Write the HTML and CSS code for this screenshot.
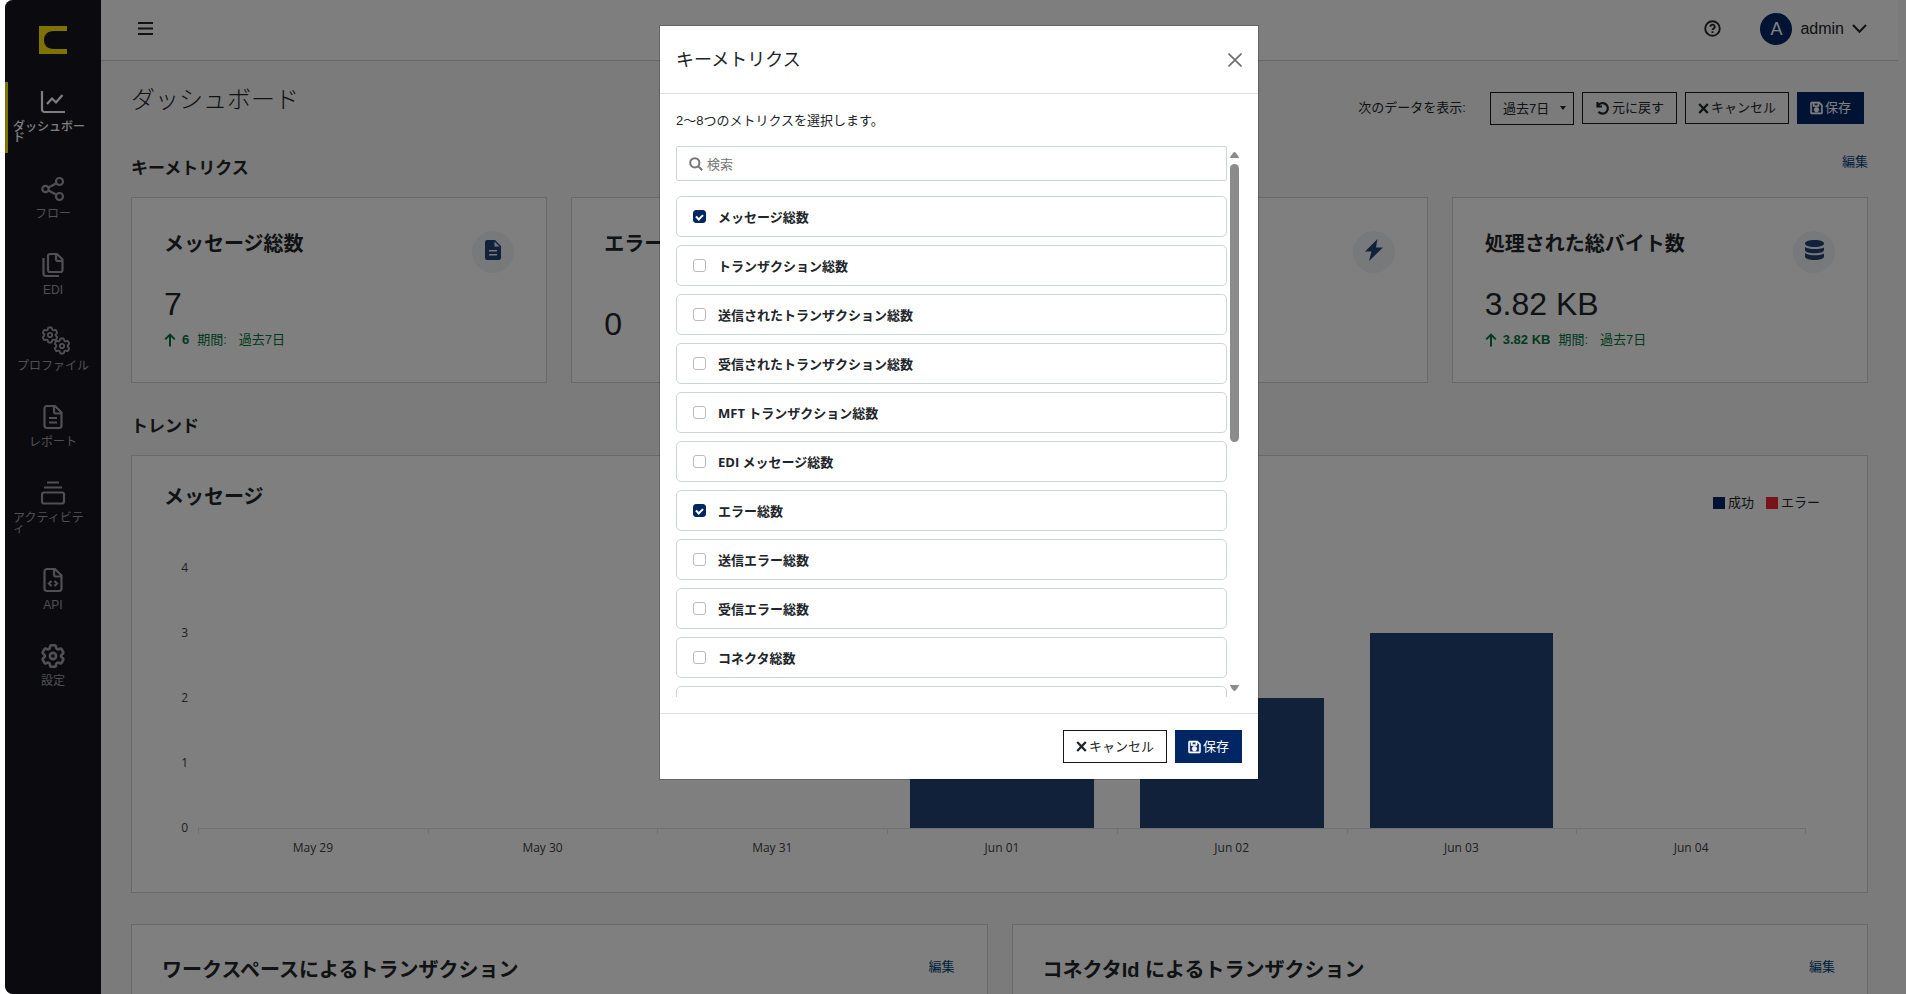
FILE: index.html
```
<!DOCTYPE html>
<html lang="ja">
<head>
    <meta charset="UTF-8">
    <meta name="viewport" content="width=device-width, initial-scale=1.0">
    <title>ダッシュボード</title>
    <link rel="stylesheet" href="styles.css">
</head>
<body>
    <svg class="sprite" aria-hidden="true">
        <symbol id="i-gear" viewBox="0 0 24 24">
            <path d="M9.594 3.94c.09-.542.56-.94 1.11-.94h2.593c.55 0 1.02.398 1.11.94l.213 1.281c.063.374.313.686.645.87.074.04.147.083.22.127.325.196.72.257 1.075.124l1.217-.456a1.125 1.125 0 0 1 1.37.49l1.296 2.247a1.125 1.125 0 0 1-.26 1.431l-1.003.827c-.293.241-.438.613-.43.992a7.723 7.723 0 0 1 0 .255c-.008.378.137.75.43.991l1.004.827c.424.35.534.955.26 1.43l-1.298 2.247a1.125 1.125 0 0 1-1.369.491l-1.217-.456c-.355-.133-.75-.072-1.076.124a6.47 6.47 0 0 1-.22.128c-.331.183-.581.495-.644.869l-.213 1.281c-.09.543-.56.94-1.11.94h-2.594c-.55 0-1.019-.398-1.11-.94l-.213-1.281c-.062-.374-.312-.686-.644-.87a6.52 6.52 0 0 1-.22-.127c-.325-.196-.72-.257-1.076-.124l-1.217.456a1.125 1.125 0 0 1-1.369-.49l-1.297-2.247a1.125 1.125 0 0 1 .26-1.431l1.004-.827c.292-.24.437-.613.43-.991a6.932 6.932 0 0 1 0-.255c.007-.38-.138-.751-.43-.992l-1.004-.827a1.125 1.125 0 0 1-.26-1.43l1.297-2.247a1.125 1.125 0 0 1 1.37-.491l1.216.456c.356.133.751.072 1.076-.124.072-.044.146-.086.22-.128.332-.183.582-.495.644-.869l.214-1.28Z"/>
            <circle cx="12" cy="12" r="2.6"/>
        </symbol>
        <symbol id="i-save" viewBox="-16 16 480 480">
            <path stroke="currentColor" stroke-width="20" d="M433.941 129.941l-83.882-83.882A48 48 0 0 0 316.118 32H48C21.49 32 0 53.49 0 80v352c0 26.51 21.49 48 48 48h352c26.51 0 48-21.49 48-48V163.882a48 48 0 0 0-14.059-33.941zM272 80v80H144V80h128zm122 352H54a6 6 0 0 1-6-6V86a6 6 0 0 1 6-6h42v104c0 13.255 10.745 24 24 24h176c13.255 0 24-10.745 24-24V83.882l78.243 78.243a6 6 0 0 1 1.757 4.243V426a6 6 0 0 1-6 6zM224 232c-48.523 0-88 39.477-88 88s39.477 88 88 88 88-39.477 88-88-39.477-88-88-88z"/>
        </symbol>
        <symbol id="i-times" viewBox="0 0 11 11">
            <path d="M1.2 1l8.600 9M9.800 1l-8.600 9" fill="none" stroke="currentColor" stroke-width="2.3"/>
        </symbol>
        <symbol id="i-up" viewBox="0 0 12 14">
            <path d="M6 13.5V1.8M1.2 6.4L6 1.6l4.8 4.8" fill="none" stroke="currentColor" stroke-width="2"/>
        </symbol>
        <symbol id="i-doc" viewBox="0 0 16 20">
            <path fill-rule="evenodd" d="M2 0h8l6 6v12a2 2 0 0 1-2 2H2a2 2 0 0 1-2-2V2a2 2 0 0 1 2-2zm7.5 1.5V6.5h5zM4 10v1.6h8V10zm0 4v1.6h8V14z"/>
        </symbol>
    </svg>

    <div class="app">
        <nav class="sidebar">
            <a href="#" class="logo" aria-label="ホーム">
                <svg viewBox="0 0 28 28" width="28" height="28"><path d="M0 0h28v5H15C8 5 5 9 5 14s3 9 10 9h13v5H0z"/></svg>
            </a>
            <a href="#" class="nav-item active">
                <svg class="nav-icon" viewBox="0 0 24 24"><path d="M1 1v18.500a2.500 2.500 0 0 0 2.500 2.500H24M6 14l5-5.500 4 4 6.500-7.500"/></svg>
                <span>ダッシュボード</span>
            </a>
            <a href="#" class="nav-item">
                <svg class="nav-icon" viewBox="0 0 24 24"><circle cx="4.500" cy="12" r="3.200"/><circle cx="18.500" cy="4.500" r="3.500"/><circle cx="18.500" cy="19.500" r="3.500"/><path d="M7.500 10.500l8-4.300M7.500 13.500l8 4.300"/></svg>
                <span>フロー</span>
            </a>
            <a href="#" class="nav-item">
                <svg class="nav-icon" viewBox="0 0 24 24"><path d="M7 3a2 2 0 0 1 2-2h7l5.500 5.500V17a2 2 0 0 1-2 2H9a2 2 0 0 1-2-2zM15 1v5a2 2 0 0 0 2 2h4.500M2.500 5v15.500a2.500 2.500 0 0 0 2.500 2.500h13"/></svg>
                <span>EDI</span>
            </a>
            <a href="#" class="nav-item">
                <svg class="nav-icon wide" viewBox="0 0 30 28"><use href="#i-gear" x="-1" y="-2" width="20" height="20"/><use href="#i-gear" x="11" y="9" width="20" height="20"/></svg>
                <span>プロファイル</span>
            </a>
            <a href="#" class="nav-item">
                <svg class="nav-icon" viewBox="0 0 24 24"><path d="M3.500 3.500a2.500 2.500 0 0 1 2.500-2.500h8l6.500 6.500v13a2.500 2.500 0 0 1-2.500 2.500H6a2.500 2.500 0 0 1-2.500-2.500zM13 1v5.500a2 2 0 0 0 2 2h5.500M8 13h8M8 17.500h8"/></svg>
                <span>レポート</span>
            </a>
            <a href="#" class="nav-item">
                <svg class="nav-icon" viewBox="0 0 24 24"><path d="M6 1.500h12M3 6.500h18"/><rect x="1" y="11.500" width="22" height="11" rx="2"/></svg>
                <span>アクティビティ</span>
            </a>
            <a href="#" class="nav-item">
                <svg class="nav-icon" viewBox="0 0 24 24"><path d="M3.500 3.500a2.500 2.500 0 0 1 2.500-2.500h8l6.500 6.500v13a2.500 2.500 0 0 1-2.500 2.500H6a2.500 2.500 0 0 1-2.500-2.500zM13 1v5.500a2 2 0 0 0 2 2h5.500M10.500 13L8 15.500l2.500 2.500M13.500 13l2.500 2.500-2.500 2.500"/></svg>
                <span>API</span>
            </a>
            <a href="#" class="nav-item">
                <svg class="nav-icon" viewBox="2 2 20 20"><use href="#i-gear" width="24" height="24"/></svg>
                <span>設定</span>
            </a>
        </nav>

        <div class="main">
            <header class="topbar">
                <button class="icon-btn" aria-label="メニュー">
                    <svg viewBox="0 0 15 13" width="15" height="13"><path d="M0 1h15M0 6.500h15M0 12h15"/></svg>
                </button>
                <div class="topbar-right">
                    <button class="icon-btn" aria-label="ヘルプ">
                        <svg viewBox="0 0 18 18" width="17" height="17"><circle cx="9" cy="9" r="7.700"/><path d="M6.700 7.200a2.300 2.300 0 1 1 3.400 2c-.8.400-1.100.8-1.100 1.500M9 12v1.700"/></svg>
                    </button>
                    <button class="user">
                        <span class="avatar">A</span>
                        <span>admin</span>
                        <svg viewBox="0 0 15 9" width="15" height="9"><path d="M1 1l6.500 6.800L14 1"/></svg>
                    </button>
                </div>
            </header>

            <main class="content">
                <div class="page-head">
                    <h1>ダッシュボード</h1>
                    <div class="actions">
                        <label for="range">次のデータを表示:</label>
                        <span class="select">
                            <select id="range">
                                <option>過去7日</option>
                                <option>過去30日</option>
                            </select>
                            <svg viewBox="0 0 6 4" width="6" height="4"><path d="M0 0h6L3 4z"/></svg>
                        </span>
                        <button class="btn">
                            <svg viewBox="0 0 14 14" width="15" height="14"><path d="M2 1v4.500h4.500M2.300 5A5.300 5.300 0 1 1 3 10.800" fill="none" stroke="currentColor" stroke-width="2.200"/></svg>元に戻す
                        </button>
                        <button class="btn"><svg width="11" height="11"><use href="#i-times"/></svg>キャンセル</button>
                        <button class="btn primary"><svg width="13" height="14"><use href="#i-save"/></svg>保存</button>
                    </div>
                </div>

                <section>
                    <div class="section-head">
                        <h2>キーメトリクス</h2>
                        <a href="#">編集</a>
                    </div>
                    <div class="metrics">
                        <div class="card metric">
                            <div class="metric-head">
                                <h3>メッセージ総数</h3>
                                <span class="badge"><svg width="16" height="20"><use href="#i-doc"/></svg></span>
                            </div>
                            <div class="metric-body">
                                <div class="value">7</div>
                                <div class="delta"><svg width="12" height="14"><use href="#i-up"/></svg><b>6</b><span>期間:</span><span class="period">過去7日</span></div>
                            </div>
                        </div>
                        <div class="card metric">
                            <div class="metric-head">
                                <h3>エラー総数</h3>
                                <span class="badge"><svg width="16" height="20"><use href="#i-doc"/></svg></span>
                            </div>
                            <div class="metric-body">
                                <div class="value">0</div>
                            </div>
                        </div>
                        <div class="card metric">
                            <div class="metric-head">
                                <h3></h3>
                                <span class="badge"><svg viewBox="0 0 20 22" width="20" height="22"><path d="M13.500 0L1 12.500h6.500L5 22 19 8.500h-7z"/></svg></span>
                            </div>
                            <div class="metric-body"></div>
                        </div>
                        <div class="card metric">
                            <div class="metric-head">
                                <h3>処理された総バイト数</h3>
                                <span class="badge"><svg viewBox="0 0 19 20" width="19" height="20"><path d="M0 3.500C0 1.200 4 0 9.500 0S19 1.200 19 3.500 15 7 9.500 7 0 5.800 0 3.500zM0 7c2 1.400 5.500 2 9.500 2S19 8.400 19 7v3c0 2-4 3.300-9.500 3.300S0 12 0 10zM0 13c2 1.500 5.500 2.200 9.500 2.200S19 14.500 19 13v3.500c0 2.200-4 3.500-9.500 3.500S0 18.700 0 16.500z"/></svg></span>
                            </div>
                            <div class="metric-body">
                                <div class="value">3.82 KB</div>
                                <div class="delta"><svg width="12" height="14"><use href="#i-up"/></svg><b>3.82 KB</b><span>期間:</span><span class="period">過去7日</span></div>
                            </div>
                        </div>
                    </div>
                </section>

                <section>
                    <div class="section-head">
                        <h2>トレンド</h2>
                    </div>
                    <div class="card trend">
                        <div class="trend-head">
                            <h3>メッセージ</h3>
                            <div class="legend">
                                <span class="ok">成功</span>
                                <span class="err">エラー</span>
                            </div>
                        </div>
                        <div class="chart">
                            <div class="y-axis"><span>4</span><span>3</span><span>2</span><span>1</span><span>0</span></div>
                            <div class="plot">
                                <div class="bars">
                                    <i style="height: 0%"></i>
                                    <i style="height: 0%"></i>
                                    <i style="height: 0%"></i>
                                    <i style="height: 50%"></i>
                                    <i style="height: 50%"></i>
                                    <i style="height: 75%"></i>
                                    <i style="height: 0%"></i>
                                </div>
                                <div class="ticks"><i></i><i></i><i></i><i></i><i></i><i></i><i></i></div>
                                <div class="x-axis">
                                    <span>May 29</span><span>May 30</span><span>May 31</span><span>Jun 01</span><span>Jun 02</span><span>Jun 03</span><span>Jun 04</span>
                                </div>
                            </div>
                        </div>
                    </div>
                </section>

                <div class="panels">
                    <div class="card panel">
                        <h3>ワークスペースによるトランザクション</h3>
                        <a href="#">編集</a>
                    </div>
                    <div class="card panel">
                        <h3>コネクタId によるトランザクション</h3>
                        <a href="#">編集</a>
                    </div>
                </div>
            </main>
        </div>

        <div class="overlay">
            <div class="modal" role="dialog" aria-modal="true" aria-labelledby="modal-title">
                <div class="modal-head">
                    <h2 id="modal-title">キーメトリクス</h2>
                    <button class="close" aria-label="閉じる">
                        <svg viewBox="0 0 14 14" width="14" height="14"><path d="M.5 .5l13 13M13.500 .5l-13 13"/></svg>
                    </button>
                </div>
                <div class="modal-body">
                    <p>2〜8つのメトリクスを選択します。</p>
                    <div class="scroll-area">
                        <div class="options">
                            <label class="search">
                                <svg viewBox="0 0 14 14" width="14" height="14"><circle cx="5.800" cy="5.800" r="4.600"/><path d="M9.200 9.200l4 4"/></svg>
                                <input type="text" placeholder="検索">
                            </label>
                            <label class="option"><input type="checkbox" checked>メッセージ総数</label>
                            <label class="option"><input type="checkbox">トランザクション総数</label>
                            <label class="option"><input type="checkbox">送信されたトランザクション総数</label>
                            <label class="option"><input type="checkbox">受信されたトランザクション総数</label>
                            <label class="option"><input type="checkbox">MFT トランザクション総数</label>
                            <label class="option"><input type="checkbox">EDI メッセージ総数</label>
                            <label class="option"><input type="checkbox" checked>エラー総数</label>
                            <label class="option"><input type="checkbox">送信エラー総数</label>
                            <label class="option"><input type="checkbox">受信エラー総数</label>
                            <label class="option"><input type="checkbox">コネクタ総数</label>
                            <label class="option"><input type="checkbox"></label>
                        </div>
                        <div class="scrollbar">
                            <svg viewBox="0 0 9 6" width="9" height="6"><path d="M0 6c0-1 3-6 4.500-6S9 5 9 6z"/></svg>
                            <div class="track"><div class="thumb"></div></div>
                            <svg viewBox="0 0 9 6" width="9" height="6"><path d="M0 0c0 1 3 6 4.500 6S9 1 9 0z"/></svg>
                        </div>
                    </div>
                </div>
                <div class="modal-foot">
                    <button class="btn"><svg width="11" height="11"><use href="#i-times"/></svg>キャンセル</button>
                    <button class="btn primary"><svg width="13" height="14"><use href="#i-save"/></svg>保存</button>
                </div>
            </div>
        </div>
    </div>
</body>
</html>
```

FILE: styles.css
```
* {
    box-sizing: border-box;
}
body {
    margin: 0;
    background: #fff;
    color: #212529;
    font-family: "Liberation Sans", "Noto Sans CJK JP", sans-serif;
    font-size: 13px;
    line-height: 20px;
}
h1, h2, h3, p {
    margin: 0;
}
a {
    color: #00427a;
    text-decoration: none;
}
button, input, select {
    font: inherit;
    color: inherit;
}
button {
    cursor: pointer;
}
svg {
    flex: none;
    fill: currentColor;
}
.sprite {
    position: absolute;
    width: 0;
    height: 0;
}
.app {
    position: relative;
    display: flex;
    height: 100vh;
    margin-left: 5px;
    border-radius: 8px 0 0 8px;
    overflow: hidden;
    background: #f7f7f7;
}

/* sidebar */
.sidebar {
    width: 96px;
    flex: none;
    display: flex;
    flex-direction: column;
    gap: 16px;
    background: #16161e;
}
.logo {
    display: flex;
    justify-content: center;
    height: 66px;
    padding-top: 26px;
    color: #ffe600;
}
.nav-item {
    display: flex;
    flex-direction: column;
    align-items: center;
    padding: 8px 8px 9px 5px;
    border-left: 3px solid transparent;
    color: #a0a0a6;
    font-size: 12px;
    line-height: 11px;
}
.nav-item.active {
    border-color: #ffe600;
    color: #fff;
    font-weight: 500;
}
.nav-icon {
    width: 24px;
    height: 24px;
    margin-bottom: 8px;
    fill: none;
    stroke: currentColor;
    stroke-width: 2.2;
    overflow: visible;
}
.nav-icon.wide {
    width: 30px;
    height: 28px;
    margin: -2px 0 6px 5px;
}

/* top bar */
.main {
    flex: 1;
    min-width: 0;
}
.topbar {
    display: flex;
    justify-content: space-between;
    align-items: center;
    height: 61px;
    margin-right: 8px;
    padding: 0 31px 3px 37px;
    border-bottom: 1px solid #ccc;
    background: #fdfdfd;
}
.topbar svg {
    fill: none;
    stroke: #212529;
    stroke-width: 2;
}
.topbar-right {
    display: flex;
    align-items: center;
    gap: 39px;
}
.icon-btn, .user, .close {
    display: flex;
    align-items: center;
    padding: 0;
    border: 0;
    background: none;
}
.user {
    gap: 8px;
    font-size: 16px;
}
.avatar {
    width: 32px;
    height: 32px;
    border-radius: 50%;
    background: #002664;
    color: #fff;
    font-size: 18px;
    line-height: 32px;
    text-align: center;
}

/* page */
.content {
    padding: 23px 38px 32px 30px;
}
.page-head {
    display: flex;
    justify-content: space-between;
    align-items: flex-start;
}
h1 {
    font-size: 24px;
    font-weight: 300;
    line-height: 32px;
}
.actions {
    display: flex;
    align-items: flex-start;
    gap: 8px;
    padding: 8px 4px 0 0;
}
.actions label {
    margin-right: 16px;
    line-height: 32px;
}
.select {
    position: relative;
}
.select select {
    display: block;
    width: 84px;
    height: 33px;
    padding: 0 12px;
    border: 1px solid #16161e;
    border-radius: 0;
    background: transparent;
    appearance: none;
}
.select svg {
    position: absolute;
    top: 14px;
    right: 8px;
}
.btn {
    display: flex;
    align-items: center;
    gap: 2px;
    height: 32px;
    padding: 0 12px;
    border: 1px solid #16161e;
    background: transparent;
    white-space: nowrap;
}
.btn.primary {
    border-color: #002664;
    background: #002664;
    color: #fff;
}
.section-head {
    display: flex;
    justify-content: space-between;
    align-items: flex-start;
    margin: 27px 0 16px;
}
.section-head h2 {
    margin-top: 5px;
    font-size: 17px;
    line-height: 24px;
}
.card {
    border: 1px solid #d2d2d4;
    background: #fff;
}
.card h3 {
    font-size: 20px;
    line-height: 26px;
    white-space: nowrap;
}
.metrics {
    display: grid;
    grid-template-columns: repeat(4, 1fr);
    gap: 24px;
}
.metric {
    padding: 33px 32px 18px;
}
.metric-head {
    display: flex;
    justify-content: space-between;
    height: 26px;
    margin-bottom: 27px;
}
.badge {
    display: flex;
    align-items: center;
    justify-content: center;
    width: 42px;
    height: 42px;
    padding-bottom: 4px;
    border-radius: 50%;
    background: #f1f3f6;
    color: #244274;
}
.metric-body {
    display: flex;
    flex-direction: column;
    justify-content: center;
    height: 80px;
}
.value {
    font-size: 32px;
    line-height: 40px;
}
.delta {
    display: flex;
    align-items: center;
    gap: 8px;
    height: 32px;
    margin-bottom: 8px;
    color: #00753f;
}
.delta svg {
    margin-right: -2px;
}
.period {
    margin-left: 4px;
}

/* trend chart */
.trend {
    height: 438px;
    padding: 28px 61px 0 32px;
}
.trend-head {
    display: flex;
    justify-content: space-between;
    margin: 0 -14px 48px 0;
}
.legend {
    display: flex;
    gap: 12px;
    padding-top: 9px;
}
.legend span {
    display: flex;
    align-items: center;
    gap: 3px;
}
.legend span::before {
    content: "";
    width: 12px;
    height: 12px;
    background: #002664;
}
.legend .err::before {
    background: #f02832;
}
.chart {
    display: flex;
    gap: 10px;
    color: #404040;
    font-family: "Open Sans", "Noto Sans", sans-serif;
    font-size: 12px;
    line-height: 14px;
}
.y-axis {
    display: flex;
    flex-direction: column;
    justify-content: space-between;
    width: 24px;
    height: 274px;
    text-align: right;
}
.plot {
    flex: 1;
    padding-top: 7px;
}
.bars, .ticks, .x-axis {
    display: grid;
    grid-template-columns: repeat(7, 1fr);
}
.bars {
    align-items: end;
    height: 260px;
}
.bars i {
    width: 80%;
    margin: 0 auto;
    background: #244274;
}
.ticks {
    height: 6px;
    border-top: 1px solid #e0e0e0;
}
.ticks i {
    border-left: 1px solid #e0e0e0;
}
.ticks i:last-child {
    border-right: 1px solid #e0e0e0;
}
.x-axis {
    margin-top: 7px;
    text-align: center;
}
.panels {
    display: grid;
    grid-template-columns: 1fr 1fr;
    gap: 24px;
    margin-top: 31px;
}
.panel {
    display: flex;
    justify-content: space-between;
    align-items: flex-start;
    height: 360px;
    padding: 32px 32px 32px 30px;
}

/* metric picker */
.overlay {
    position: absolute;
    inset: 0;
    display: flex;
    justify-content: center;
    align-items: flex-start;
    padding: 26px 0 0 7px;
    background: rgba(0, 0, 0, 0.5);
}
.modal {
    width: 598px;
    background: #fff;
    box-shadow: 0 0 0 1px rgba(0, 0, 0, 0.2);
}
.modal-head {
    display: flex;
    justify-content: space-between;
    align-items: center;
    height: 68px;
    padding: 0 16px;
    border-bottom: 1px solid #dee2e6;
}
.modal-head h2 {
    font-size: 18px;
    font-weight: 400;
}
.close svg {
    fill: none;
    stroke: #6c6c6c;
    stroke-width: 1.6;
}
.modal-body {
    padding: 17px 16px 16px;
}
.modal-body p {
    margin-bottom: 15px;
}
.scroll-area {
    display: flex;
    height: 551px;
    overflow: hidden;
}
.options {
    flex: 1;
    font-family: "Open Sans", "Noto Sans CJK JP", sans-serif;
}
.search {
    display: flex;
    align-items: center;
    gap: 4px;
    height: 35px;
    margin-bottom: 15px;
    padding: 0 12px;
    border: 1px solid #ced4da;
    border-radius: 2px;
    color: #767676;
}
.search svg {
    fill: none;
    stroke: currentColor;
    stroke-width: 2;
}
.search input {
    flex: 1;
    padding: 0;
    border: 0;
    outline: 0;
    background: none;
}
.search input::placeholder {
    color: #767676;
    opacity: 1;
}
.option {
    display: flex;
    align-items: center;
    gap: 12px;
    height: 41px;
    margin-bottom: 8px;
    padding: 0 16px;
    border: 1px solid #ced4d4;
    border-radius: 5px;
    font-weight: 700;
}
.option input {
    position: relative;
    flex: none;
    width: 13px;
    height: 13px;
    margin: 0;
    border: 1px solid #b8bcc0;
    border-radius: 3px;
    background: #fff;
    appearance: none;
}
.option input:checked {
    border-color: #002664;
    background: #002664;
}
.option input:checked::after {
    content: "";
    position: absolute;
    top: 2px;
    left: 3px;
    box-sizing: border-box;
    width: 5px;
    height: 7px;
    border: solid #fff;
    border-width: 0 2px 2px 0;
    transform: rotate(45deg);
}
.scrollbar {
    display: flex;
    flex-direction: column;
    align-items: center;
    width: 15px;
    padding: 6px 0;
    color: #8b8b8b;
}
.track {
    flex: 1;
    padding: 6px 0;
}
.thumb {
    width: 9px;
    height: 278px;
    border-radius: 5px;
    background: #8b8b8b;
}
.modal-foot {
    display: flex;
    justify-content: flex-end;
    gap: 8px;
    padding: 16px;
    border-top: 1px solid #dee2e6;
}
.modal-foot .btn {
    height: 33px;
}
```
